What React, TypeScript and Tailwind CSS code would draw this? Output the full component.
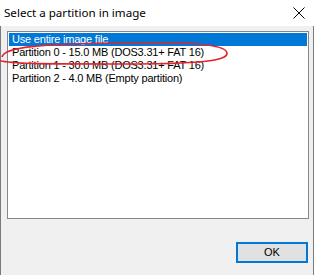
const ROWS = [
  "Use entire image file",
  "Partition 0 - 15.0 MB (DOS3.31+ FAT 16)",
  "Partition 1 - 30.0 MB (DOS3.31+ FAT 16)",
  "Partition 2 - 4.0 MB (Empty partition)",
];

export default function App() {
  return (
    <div className="relative w-[314px] h-[275px] flex flex-col bg-[#f0f0f0] overflow-hidden">
      <div className="h-[26px] shrink-0 bg-white flex items-center justify-between pl-[4px] pr-[8px]">
        <span className="text-[11.6px] text-black font-['Noto_Sans',sans-serif]">
          Select a partition in image
        </span>
        <svg width="12" height="12" viewBox="0 0 12 12" className="mr-[1px]">
          <path d="M0.5 0.5 L11.5 11.5 M11.5 0.5 L0.5 11.5" stroke="#000" strokeWidth="1" />
        </svg>
      </div>

      <div className="flex-1 flex flex-col border-l border-r border-[#7a7a7a] pl-[6px] pr-[4px] pt-[5px]">
        <div className="h-[188px] bg-white border border-[#828790] p-[1px] font-['Liberation_Sans',sans-serif] text-[11px] leading-[13px] tracking-[-0.2px]">
          {ROWS.map((row, i) => (
            <div
              key={row}
              className={`h-[13px] pl-[3px] whitespace-nowrap ${
                i === 0 ? "bg-[#0078d7] text-white" : "text-black"
              }`}
            >
              {row}
            </div>
          ))}
        </div>

        <div className="flex justify-end mt-[23px] pr-[1px]">
          <button className="w-[72px] h-[21px] bg-[#e1e1e1] border-2 border-[#0078d7] text-[11px] text-black font-['Liberation_Sans',sans-serif]">
            OK
          </button>
        </div>
      </div>

      <svg
        className="absolute left-0 top-0 pointer-events-none"
        width="314"
        height="275"
        viewBox="0 0 314 275"
      >
        <path
          d="M2 57 C 4 47, 40 44, 120 43 C 190 42, 226 44, 227 53 C 228 61, 200 64, 120 64 C 50 64, 0 64, -4 59"
          fill="none"
          stroke="#e0242a"
          strokeWidth="1.6"
        />
      </svg>
    </div>
  );
}
